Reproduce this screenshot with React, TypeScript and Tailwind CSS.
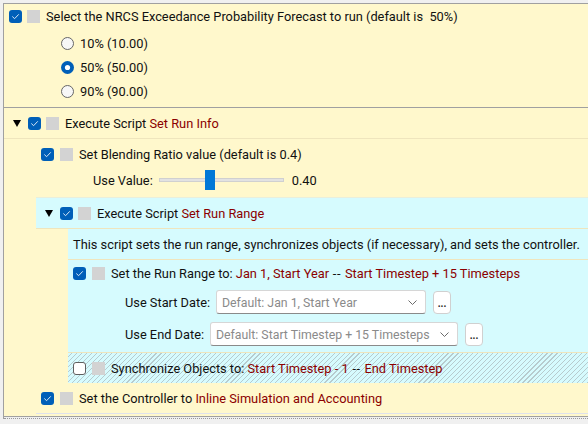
import type { ReactNode } from 'react';

const FONT = "font-['Segoe_UI','Roboto','Liberation_Sans',sans-serif]";

function CheckBox({ checked = true }: { checked?: boolean }) {
    if (!checked) {
        return <span className="block w-[13px] h-[13px] shrink-0 rounded-[3px] border border-[#5f5f5f] bg-white" />;
    }
    return (
        <svg className="block w-[13px] h-[13px] shrink-0" viewBox="0 0 13 13">
            <rect x="0" y="0" width="13" height="13" rx="3" fill="#005fb8" />
            <path d="M3.6 6.8 L5.6 8.7 L9.5 4.6" fill="none" stroke="#dbe8f6" strokeWidth="1" strokeLinecap="round" strokeLinejoin="round" />
        </svg>
    );
}

function GraySq() {
    return <span className="block w-[13px] h-[13px] shrink-0 bg-[#d3d3d3]" />;
}

function Tri() {
    return (
        <svg className="block w-[8px] h-[7px] shrink-0" viewBox="0 0 8 7">
            <path d="M0 0 L8 0 L4 7 Z" fill="#000" />
        </svg>
    );
}

function Radio({ checked = false }: { checked?: boolean }) {
    if (checked) {
        return (
            <svg className="block w-[13px] h-[13px] shrink-0" viewBox="0 0 13 13">
                <circle cx="6.5" cy="6.5" r="6.5" fill="#005fb8" />
                <circle cx="6.5" cy="6.5" r="2.6" fill="#fff" />
            </svg>
        );
    }
    return (
        <svg className="block w-[13px] h-[13px] shrink-0" viewBox="0 0 13 13">
            <circle cx="6.5" cy="6.5" r="6" fill="#f7f7f7" stroke="#666" strokeWidth="1" />
        </svg>
    );
}

function Red({ children }: { children: ReactNode }) {
    return <span className="text-[#8b0000]">{children}</span>;
}

// the "--" separator between two red values
function Sep() {
    return <span className="tracking-[0.6px]"> -- </span>;
}

function Txt({ children, className = '' }: { children: ReactNode; className?: string }) {
    return <span className={`pt-[2px] whitespace-nowrap ${className}`}>{children}</span>;
}

function Select({ value, width }: { value: string; width: string }) {
    return (
        <div className={`${width} h-[24px] flex items-center justify-between pl-[5px] pr-[8px] bg-white border border-[#d6d6d6] border-b-[#8a8a8a] rounded-[3px] text-[#8a8a8a]`}>
            <Txt className="text-[12.3px]">{value}</Txt>
            <svg className="w-[9px] h-[5px] shrink-0" viewBox="0 0 9 5">
                <path d="M0.5 0.5 L4.5 4.5 L8.5 0.5" fill="none" stroke="#6b6b6b" strokeWidth="1" />
            </svg>
        </div>
    );
}

function DotsButton() {
    return (
        <div className="w-[18px] h-[23px] flex items-end justify-center pb-[4px] bg-white border border-[#d0d0d0] rounded-[4px] text-[10px] font-bold leading-none text-[#222]">
            ...
        </div>
    );
}

export default function App() {
    return (
        <div className={`w-[588px] h-[424px] overflow-hidden bg-[#f0f0f0] pl-[3px] pt-[3px] text-[12.8px] text-[#111] ${FONT}`}>
            <div className="border-l border-t border-[#a0a0a0]">
                {/* Forecast selection */}
                <div className="bg-[#fff8cc] pb-[4px] border-b border-[#a0a0a0]">
                    <div className="h-[24px] flex items-center pl-[5px] gap-[5px]">
                        <CheckBox />
                        <GraySq />
                        <Txt className="ml-[1px]">
                            Select the NRCS Exceedance Probability Forecast to run (default is&nbsp; 50%)
                        </Txt>
                    </div>
                    <div className="pt-[3px] pl-[57px]">
                        {[
                            ['10% (10.00)', false],
                            ['50% (50.00)', true],
                            ['90% (90.00)', false],
                        ].map(([label, on]) => (
                            <div key={label as string} className="h-[24px] flex items-center gap-[6px]">
                                <Radio checked={on as boolean} />
                                <Txt>{label}</Txt>
                            </div>
                        ))}
                    </div>
                </div>

                {/* Set Run Info script */}
                <div className="bg-[#fff8cc] pb-[2px] border-b border-[#a0a0a0]">
                    <div className="h-[31px] flex items-center pl-[9px] border-b border-[#efe5bd]">
                        <Tri />
                        <span className="ml-[7px]"><CheckBox /></span>
                        <span className="ml-[5px]"><GraySq /></span>
                        <Txt className="ml-[6px]">
                            Execute Script <Red>Set Run Info</Red>
                        </Txt>
                    </div>

                    <div className="pl-[32px]">
                        {/* Blending ratio */}
                        <div className="pb-[6px] border-b border-[#e9efdc]">
                            <div className="h-[30px] flex items-center pl-[5px] gap-[6px]">
                                <CheckBox />
                                <GraySq />
                                <Txt>Set Blending Ratio value (default is 0.4)</Txt>
                            </div>
                            <div className="h-[22px] flex items-center pl-[57px]">
                                <Txt>Use Value:</Txt>
                                <div className="relative ml-[6px] w-[125px] h-[4px] bg-[#e2e2e2] border border-[#d0d0d0]">
                                    <span className="absolute left-[45px] top-[-9px] w-[10px] h-[20px] bg-[#0078d7]" />
                                </div>
                                <Txt className="ml-[8px]">0.40</Txt>
                            </div>
                        </div>

                        {/* Set Run Range script */}
                        <div>
                            <div className="h-[31px] flex items-center pl-[9px] bg-[#d6fbfe] border-b border-[#efe5bd]">
                                <Tri />
                                <span className="ml-[7px]"><CheckBox /></span>
                                <span className="ml-[5px]"><GraySq /></span>
                                <Txt className="ml-[6px]">
                                    Execute Script <Red>Set Run Range</Red>
                                </Txt>
                            </div>
                            <div className="pl-[32px]">
                                <div className="bg-[#d6fbfe]">
                                    <div className="h-[31px] flex items-center pl-[5px] border-b border-[#efe5bd]">
                                        <Txt>
                                            This script sets the run range, synchronizes objects (if necessary), and sets the controller.
                                        </Txt>
                                    </div>

                                    <div className="pb-[6px]">
                                        <div className="h-[26px] flex items-center pl-[5px] gap-[6px]">
                                            <CheckBox />
                                            <GraySq />
                                            <Txt>
                                                Set the Run Range to: <Red>Jan 1, Start Year</Red><Sep /><Red>Start Timestep + 15 Timesteps</Red>
                                            </Txt>
                                        </div>
                                        <div className="mt-[4px] h-[24px] flex items-center pl-[57px]">
                                            <Txt className="w-[91px]">Use Start Date:</Txt>
                                            <Select value="Default: Jan 1, Start Year" width="w-[210px]" />
                                            <span className="ml-[7px]"><DotsButton /></span>
                                        </div>
                                        <div className="mt-[8px] h-[24px] flex items-center pl-[57px]">
                                            <Txt className="w-[85px]">Use End Date:</Txt>
                                            <Select value="Default: Start Timestep + 15 Timesteps" width="w-[248px]" />
                                            <span className="ml-[7px]"><DotsButton /></span>
                                        </div>
                                    </div>

                                    <div className="h-[31px] flex items-center pl-[5px] gap-[6px] border-t border-[#efe5bd] bg-[repeating-linear-gradient(135deg,transparent_0px,transparent_2.7px,#b7cbce_2.7px,#b7cbce_3.5px)]">
                                        <CheckBox checked={false} />
                                        <GraySq />
                                        <Txt>
                                            Synchronize Objects to: <Red>Start Timestep - 1</Red><Sep /><Red>End Timestep</Red>
                                        </Txt>
                                    </div>
                                </div>
                            </div>
                        </div>

                        {/* Controller */}
                        <div className="h-[31px] flex items-center pl-[5px] gap-[6px] border-b border-[#dfe2ec]">
                            <CheckBox />
                            <GraySq />
                            <Txt>
                                Set the Controller to <Red>Inline Simulation and Accounting</Red>
                            </Txt>
                        </div>
                    </div>
                </div>
                <div className="mt-[1px] border-t border-dotted border-[#9a9a9a]" />
            </div>
        </div>
    );
}
